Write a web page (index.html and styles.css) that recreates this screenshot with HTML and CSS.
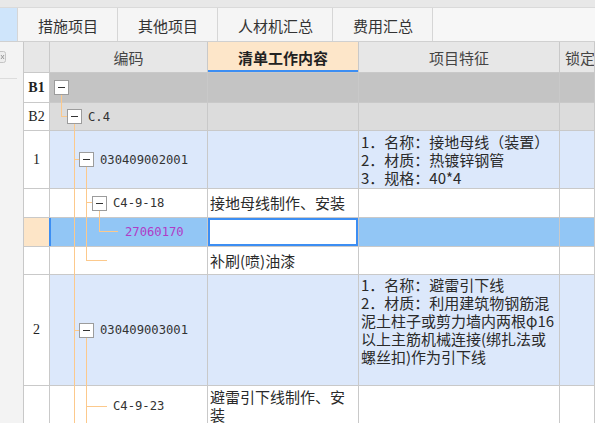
FILE: index.html
```html
<!DOCTYPE html>
<html lang="zh-CN">
<head>
<meta charset="utf-8">
<title>清单</title>
<link rel="stylesheet" href="styles.css">
</head>
<body>
<div class="topstrip"></div>
<div class="tabbar">
  <div class="tab-lead"></div>
  <div class="tab">措施项目</div>
  <div class="tab">其他项目</div>
  <div class="tab">人材机汇总</div>
  <div class="tab">费用汇总</div>
  <div class="tab-fill"></div>
</div>
<div class="main">
  <aside class="side">
    <svg class="side-close" width="7" height="12" viewBox="0 0 7 12">
      <rect x="-5.5" y="0.5" width="11" height="11" rx="2" fill="#ededed" stroke="#c4c4c4"/>
      <path d="M1 4 L4 8 M4 4 L1 8" stroke="#9a9a9a" stroke-width="1"/>
    </svg>
    <div class="side-rule"></div>
  </aside>
  <div class="grid">
    <div class="row head">
      <div class="c hnum"></div>
      <div class="c hcell">编码</div>
      <div class="c hcell active">清单工作内容</div>
      <div class="c hcell">项目特征</div>
      <div class="c hcell lockh">锁定</div>
    </div>
    <div class="body">
      <div class="row b1 h30">
        <div class="c num bold">B1</div>
        <div class="c code l0"><span class="tog"></span></div>
        <div class="c work"></div>
        <div class="c feat"></div>
        <div class="c lock"></div>
      </div>
      <div class="row b2 h28">
        <div class="c num">B2</div>
        <div class="c code l1"><span class="tog"></span><span class="ct">C.4</span></div>
        <div class="c work"></div>
        <div class="c feat"></div>
        <div class="c lock"></div>
      </div>
      <div class="row qd h58">
        <div class="c num">1</div>
        <div class="c code l2"><span class="tog"></span><span class="ct">030409002001</span></div>
        <div class="c work"></div>
        <div class="c feat"><div class="lines">1．名称：接地母线（装置）<br>2．材质：热镀锌钢管<br>3．规格：40*4</div></div>
        <div class="c lock"></div>
      </div>
      <div class="row plain h29">
        <div class="c num"></div>
        <div class="c code l3"><span class="tog"></span><span class="ct">C4-9-18</span></div>
        <div class="c work">接地母线制作、安装</div>
        <div class="c feat"></div>
        <div class="c lock"></div>
      </div>
      <div class="row sel h29">
        <div class="c num"></div>
        <div class="c code l4"><span class="ct purple">27060170</span></div>
        <div class="c work edit"></div>
        <div class="c feat"></div>
        <div class="c lock"></div>
      </div>
      <div class="row plain h28">
        <div class="c num"></div>
        <div class="c code"></div>
        <div class="c work">补刷(喷)油漆</div>
        <div class="c feat"></div>
        <div class="c lock"></div>
      </div>
      <div class="row qd h111">
        <div class="c num">2</div>
        <div class="c code l2"><span class="tog"></span><span class="ct">030409003001</span></div>
        <div class="c work"></div>
        <div class="c feat top"><div class="lines">1．名称：避雷引下线<br>2．材质：利用建筑物钢筋混<br>泥土柱子或剪力墙内两根φ16<br>以上主筋机械连接(绑扎法或<br>螺丝扣)作为引下线</div></div>
        <div class="c lock"></div>
      </div>
      <div class="row plain h40">
        <div class="c num"></div>
        <div class="c code l3b"><span class="ct">C4-9-23</span></div>
        <div class="c work"><div class="lines">避雷引下线制作、安<br>装</div></div>
        <div class="c feat"></div>
        <div class="c lock"></div>
      </div>
      <svg class="tree" width="571" height="350" viewBox="0 0 571 350">
        <g stroke="#fcc98c" stroke-width="1" fill="none" shape-rendering="crispEdges">
          <path d="M37.5 22 V43.5 H43"/>
          <path d="M50.5 51 V350"/>
          <path d="M50 86.5 H55"/>
          <path d="M62.5 94 V187.5 H83"/>
          <path d="M62 129.5 H68"/>
          <path d="M75.5 138 V158.5 H94"/>
          <path d="M50 257.5 H55"/>
          <path d="M62.5 265 V350"/>
          <path d="M62 333.5 H83"/>
        </g>
      </svg>
    </div>
  </div>
</div>
</body>
</html>
```

FILE: styles.css
```css
* { box-sizing: border-box; }
html, body { margin: 0; padding: 0; }
body {
  width: 595px;
  height: 423px;
  overflow: hidden;
  background: #f4f4f4;
  font-family: "Noto Sans CJK SC", sans-serif;
  color: #333;
}
.topstrip { height: 7px; background: #e8e8e8; }
.tabbar {
  display: flex;
  height: 35px;
  border-top: 1px solid #dadada;
  border-bottom: 1px solid #d0d0d0;
  background: #f5f5f5;
}
.tab-lead { width: 18px; background: #cfe5fb; border-right: 1px solid #d6d6d6; }
.tab {
  padding: 2px 19px 0 20px;
  border-right: 1px solid #d6d6d6;
  font-size: 15px;
  line-height: 31px;
  color: #333;
  white-space: nowrap;
}
.tab-fill { flex: 1; background: #f7f7f7; }
.main { display: flex; height: 381px; }
.side { width: 23px; background: #f3f3f3; }
.side-close { display: block; margin-top: 9px; }
.side-rule { width: 17px; height: 1px; margin-top: 15px; background: #dcdcdc; }
.grid {
  flex: 1;
  border-left: 1px solid #c8c8c8;
  background: #fff;
  overflow: hidden;
}
.row {
  display: grid;
  grid-template-columns: 26px 158px 151px 201px 1fr;
  border-bottom: 1px solid #c9c9c9;
}
.c {
  border-right: 1px solid #c9c9c9;
  display: flex;
  align-items: center;
  overflow: hidden;
  white-space: nowrap;
}
.head { height: 31px; background: #e7e7e7; }
.hnum { background: #e7e7e7; }
.hcell {
  justify-content: center;
  font-size: 15px;
  color: #444;
  padding-top: 1px;
}
.lockh { justify-content: flex-start; padding-left: 5px; }
.active {
  background: #fde6c9;
  font-weight: bold;
  color: #222;
  box-shadow: inset 0 -2px 0 #3c8ef3;
}
.body { position: relative; }
.tree { position: absolute; left: 0; top: 0; pointer-events: none; }
.h28 { height: 28px; }
.h29 { height: 29px; }
.h30 { height: 30px; }
.h40 { height: 40px; }
.h58 { height: 58px; }
.h111 { height: 111px; }
.num {
  justify-content: center;
  background: #fff;
  font-family: "Liberation Serif", serif;
  font-size: 14px;
  color: #222;
}
.bold { font-weight: bold; }
.b1 .c:not(.num) { background: #c4c4c4; }
.b2 .c:not(.num) { background: #dcdcdc; }
.qd .c:not(.num) { background: #dce8fb; }
.plain .c { background: #fff; }
.sel .c { background: #92c6f5; }
.sel .num { background: #fde5c7; border-right-color: #3c8ef3; }
.sel .code { box-shadow: inset 1px 0 0 #3c8ef3; }
.sel .edit { background: #fff; box-shadow: inset 0 0 0 2px #3c8ef3; }
.code { font-family: "DejaVu Sans Mono", monospace; font-size: 12.2px; color: #333; }
.l0 { padding-left: 4px; }
.l1 { padding-left: 17px; }
.l2 { padding-left: 29px; }
.l3 { padding-left: 42px; }
.l3b { padding-left: 63px; }
.l4 { padding-left: 75px; }
.tog {
  position: relative;
  flex: none;
  width: 15px;
  height: 15px;
  border: 1px solid #9c9c9c;
  background: #fff;
  margin-right: 6px;
}
.tog::after {
  content: "";
  position: absolute;
  left: 3px;
  top: 6px;
  width: 7px;
  height: 1px;
  background: #333;
}
.purple { color: #b03cc6; }
.work, .feat { font-size: 15px; line-height: 18px; color: #2a2a2a; padding-left: 2px; }
.feat.top { align-items: flex-start; padding-top: 1px; }
.lines { white-space: nowrap; }
```
